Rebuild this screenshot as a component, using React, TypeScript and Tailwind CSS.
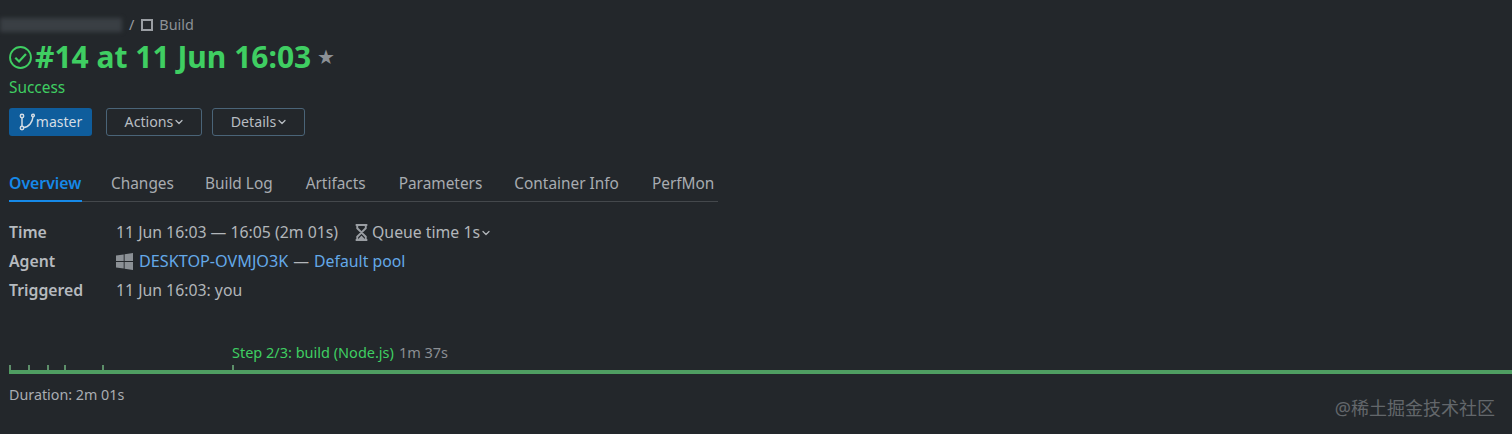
import { ChevronDown } from "lucide-react";

const font = "font-['Noto_Sans','Open_Sans',sans-serif]";

const tabs = [
  { label: "Changes", gap: "ml-[29px]" },
  { label: "Build Log", gap: "ml-[31px]" },
  { label: "Artifacts", gap: "ml-[33px]" },
  { label: "Parameters", gap: "ml-[33px]" },
  { label: "Container Info", gap: "ml-[32px]" },
  { label: "PerfMon", gap: "ml-[33px]" },
];
const ticks = ["ml-0", "ml-[17px]", "ml-[17px]", "ml-[15px]", "ml-[36px]", "ml-[128px]"];

function SmallChevron() {
  return <ChevronDown className="h-3 w-3 shrink-0" strokeWidth={2.5} />;
}

function OutlineButton({ label, width }: { label: string; width: string }) {
  return (
    <button className={`flex h-7 ${width} items-center justify-center rounded-[3px] border border-[#4a6478] pl-0.5 text-[14.2px] leading-none text-[#b8bdc2]`}>
      {label}
      <SmallChevron />
    </button>
  );
}

function SuccessIcon() {
  return (
    <svg viewBox="0 0 22 22" className="h-[23px] w-[23px] shrink-0" fill="none" stroke="#3fce62" strokeWidth="1.8">
      <circle cx="11" cy="11" r="10" />
      <path d="M6 11.300l3.600 3.500 6.600-7.200" strokeWidth="2.100" />
    </svg>
  );
}

function BranchIcon() {
  return (
    <svg viewBox="0 0 16 18" className="h-[18px] w-4 shrink-0" fill="none" stroke="#d5dde4" strokeWidth="1.500">
      <circle cx="3" cy="3" r="1.700" />
      <circle cx="3" cy="15" r="1.700" />
      <circle cx="14" cy="2.500" r="1.300" />
      <path d="M3 4.700v8.600M4.600 14.500C10 14 13.500 9 14 3.800" />
    </svg>
  );
}

function Hourglass() {
  return (
    <svg viewBox="0 0 12 16" className="h-[17px] w-[13px] shrink-0" fill="none" stroke="#9a9ea3" strokeWidth="1.800">
      <path d="M0.500 1h11M0.500 15h11M2 1v3l4 4 4-4V1M2 15v-3l4-4 4 4v3" />
      <path d="M2.500 14.500L6 10.800l3.500 3.700z" fill="#9a9ea3" stroke="none" />
    </svg>
  );
}

function WindowsLogo() {
  return (
    <svg viewBox="0 0 17 17" className="h-[17px] w-[17px] shrink-0" fill="#8b9095">
      <path d="M0 2.600l7.700-1.100v6.500H0zM8.600 1.300L17 0v8H8.600zM0 9h7.700v6.500L0 14.400zM8.600 9H17v8l-8.400-1.300z" />
    </svg>
  );
}

function InfoRow({ label, children }: { label: string; children: React.ReactNode }) {
  return (
    <div className="flex h-[29px] items-center text-[15.8px]">
      <span className="w-[107px] shrink-0 text-[15.8px] font-semibold text-[#b6babf]">{label}</span>
      {children}
    </div>
  );
}

export default function App() {
  return (
    <div className={`relative h-[434px] overflow-hidden bg-[#23272b] pt-[15px] ${font}`}>
      <div className="flex h-5 items-center text-[14.4px] text-[#8d9196]">
        <div className="h-[14px] w-[122px] bg-[#3a3f44] blur-[2px]" />
        <span className="ml-[7px] text-[#9a9ea3]">/</span>
        <span className="ml-[7px] h-[12px] w-[12px] border-[2.500px] border-[#9a9ea3]" />
        <span className="ml-[6px]">Build</span>
      </div>

      <div className="mt-[3px] flex h-[38px] items-center pl-[9px]">
        <SuccessIcon />
        <h1 className="ml-[3px] text-[30px] leading-none font-bold text-[#3fce62]">#14 at 11 Jun 16:03</h1>
        <span className="ml-[6px] text-xl leading-none text-[#8b9095]">★</span>
      </div>

      <div className="mt-[2px] h-5 pl-[9px] text-[15.4px] leading-5 text-[#3fce62]">Success</div>

      <div className="mt-[10px] flex items-center gap-[10px] pl-[9px]">
        <button className="mr-1 flex h-7 w-[83px] items-center justify-center gap-px rounded-[3px] bg-[#0f5d9c] text-[14px] leading-none text-[#d5dde4]">
          <BranchIcon />
          master
        </button>
        <OutlineButton label="Actions" width="w-24" />
        <OutlineButton label="Details" width="w-[93px]" />
      </div>

      <div className="mt-[30px] ml-[9px] flex h-[36px] w-[709px] items-start border-b border-[#44484c] text-[15.400px] whitespace-nowrap text-[#a8acb1]">
        <span className="h-[36px] w-[73px] shrink-0 border-b-2 border-[#1689e8] pt-[6px] text-[15.800px] font-semibold text-[#1689e8]">Overview</span>
        {tabs.map((tab) => (
          <span key={tab.label} className={`${tab.gap} shrink-0 pt-[6px]`}>{tab.label}</span>
        ))}
      </div>

      <div className="mt-4 pl-[9px] text-[#b2b6ba]">
        <InfoRow label="Time">
          <span>11 Jun 16:03 — 16:05 (2m 01s)</span>
          <span className="ml-[17px] flex items-center gap-[4px]">
            <Hourglass />
            Queue time 1s
          </span>
          <SmallChevron />
        </InfoRow>
        <InfoRow label="Agent">
          <WindowsLogo />
          <span className="ml-[6px] text-[16.2px] text-[#64a9e8]">DESKTOP-OVMJO3K</span>
          <span className="mx-[5px]">—</span>
          <span className="text-[#64a9e8]">Default pool</span>
        </InfoRow>
        <InfoRow label="Triggered">
          <span>11 Jun 16:03: you</span>
        </InfoRow>
      </div>

      <div className="mt-[38px] h-[18px] pl-[232px] text-[14.500px] leading-[18px]">
        <span className="text-[#3fce62]">Step 2/3: build (Node.js)</span>
        <span className="ml-[5px] text-[#8b8f94]">1m 37s</span>
      </div>

      <div className="mt-1 flex h-[5px] items-start pl-[9px]">
        {ticks.map((gap, i) => (
          <div key={i} className={`h-[5px] w-0.5 shrink-0 bg-[#5d8f6a] ${gap}`} />
        ))}
      </div>
      <div className="ml-[9px] h-1 bg-[#4f9e62]" />

      <div className="mt-[12px] pl-[9px] text-[14.300px] leading-[18px] text-[#a9adb2]">Duration: 2m 01s</div>

      <div className="absolute right-[17px] bottom-[14px] font-['Noto_Sans','Noto_Sans_CJK_SC',sans-serif] text-[18px] leading-6 text-[#63676b]">
        @稀土掘金技术社区
      </div>
    </div>
  );
}
